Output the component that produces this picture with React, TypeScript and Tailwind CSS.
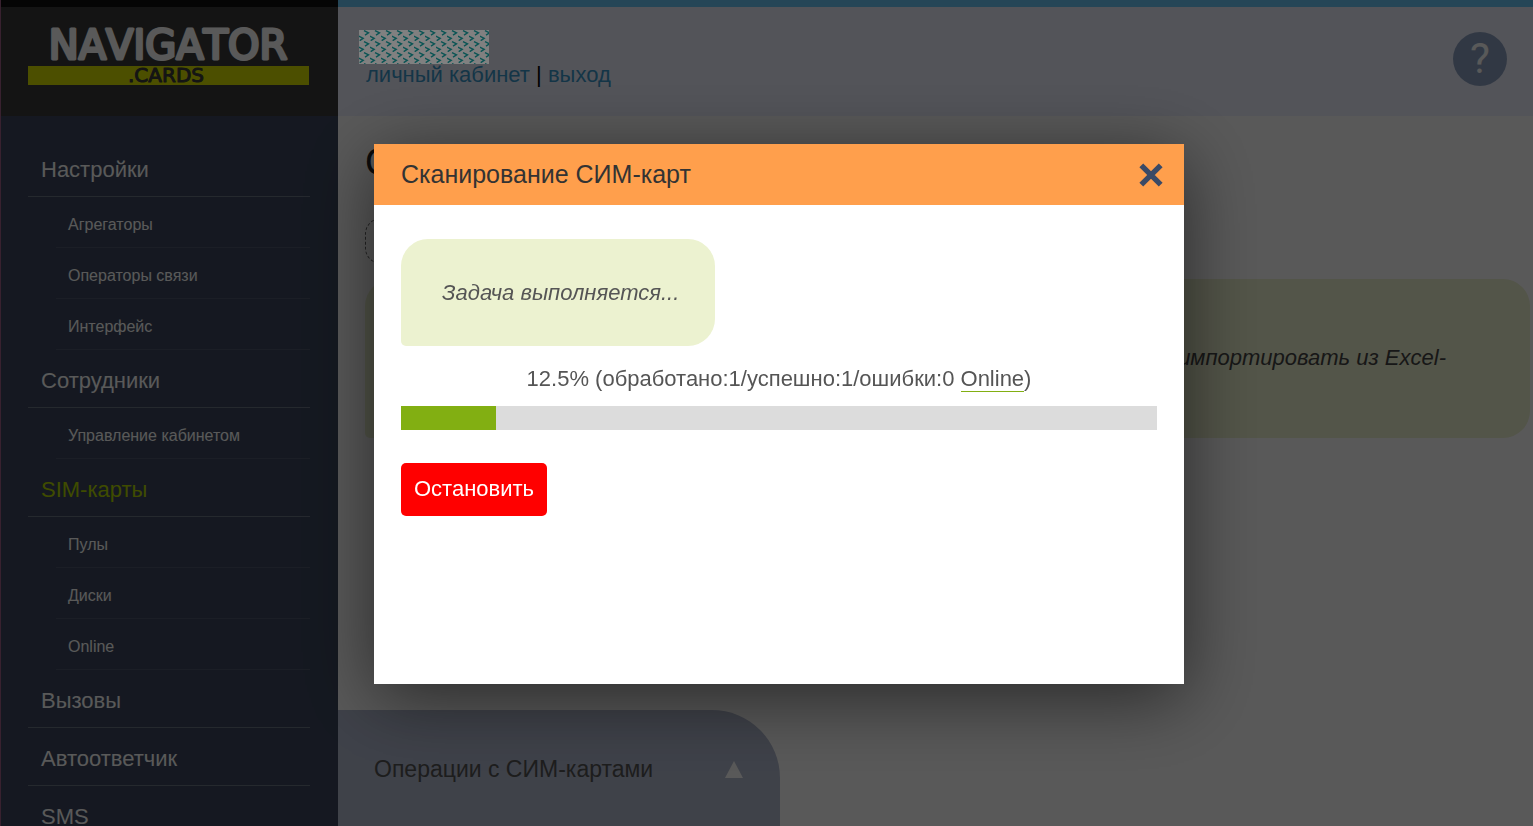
import React from "react";

type Section = { title: string; active?: boolean; items: string[] };

const sections: Section[] = [
  { title: "Настройки", items: ["Агрегаторы", "Операторы связи", "Интерфейс"] },
  { title: "Сотрудники", items: ["Управление кабинетом"] },
  { title: "SIM-карты", active: true, items: ["Пулы", "Диски", "Online"] },
  { title: "Вызовы", items: [] },
  { title: "Автоответчик", items: [] },
  { title: "SMS", items: [] },
];

function Logo() {
  return (
    <svg
      viewBox="0 0 281 60"
      className="block w-[281px] overflow-visible [font-kerning:none]"
      role="img"
      aria-label="Navigator.cards"
    >
      <rect y="41" width="281" height="19" fill="#d9e200" />
      <text
        x="140"
        y="34"
        textAnchor="middle"
        fontFamily="DejaVu Sans, sans-serif"
        fontSize="40"
        fill="#fff"
        stroke="#fff"
        strokeWidth="3"
        strokeLinejoin="round"
      >
        NAVIGATOR
      </text>
      <text
        x="138"
        y="57"
        textAnchor="middle"
        fontFamily="DejaVu Sans, sans-serif"
        fontSize="20"
        fill="#3a3a3a"
        stroke="#3a3a3a"
        strokeWidth="1"
        strokeLinejoin="round"
      >
        .CARDS
      </text>
    </svg>
  );
}

function Sidebar() {
  return (
    <aside className="flex w-[338px] shrink-0 flex-col border-l border-[#a06088] bg-[#3c475e]">
      <div className="h-[116px] shrink-0 border-t-[7px] border-[#101010] bg-[#3a3a3a] pt-[18px] pl-[27px]">
        <Logo />
      </div>
      <nav className="pt-[23px] pr-7 pl-[27px]">
        {sections.map((s) => (
          <div key={s.title}>
            <a
              href="#"
              className={
                "flex h-[58px] items-center border-b border-[#6c7585] pt-1 pl-[13px] text-[22px] " +
                (s.active ? "text-[#b4d800]" : "text-white")
              }
            >
              {s.title}
            </a>
            {s.items.map((item) => (
              <a
                key={item}
                href="#"
                className="ml-7 flex h-[51px] items-center border-b border-[#4e586d] pt-[6px] pl-3 text-base text-white"
              >
                {item}
              </a>
            ))}
          </div>
        ))}
      </nav>
    </aside>
  );
}

function HiddenName() {
  return (
    <svg className="relative z-20 -ml-[7px] block h-[34px] w-[130px]" aria-hidden="true">
      <defs>
        <pattern id="chevrons" width="11" height="11" patternUnits="userSpaceOnUse">
          <rect width="11" height="11" fill="#808080" />
          <path
            d="M5 .6 9.500 2.900 6 5.200M-.3 6.100 4.200 8.400 .7 10.700"
            fill="none"
            stroke="#0a5454"
            strokeWidth="1.4"
          />
        </pattern>
      </defs>
      <rect width="130" height="34" fill="url(#chevrons)" />
    </svg>
  );
}

function Page() {
  return (
    <div className="flex min-w-0 flex-1 flex-col bg-white">
      <header className="flex h-[116px] shrink-0 justify-between border-t-[7px] border-[#6cc8fa] bg-[#edf0ff] pr-[26px] pl-7">
        <div className="pt-[23px] text-[22px] leading-6">
          <HiddenName />
          <div className="-mt-px">
            <a href="#" className="text-[#3a98cc]">личный кабинет</a> |{" "}
            <a href="#" className="text-[#3a98cc]">выход</a>
          </div>
        </div>
        <button
          type="button"
          aria-label="Помощь"
          className="mt-[25px] flex size-[54px] items-center justify-center rounded-full bg-[#8ea2c2] font-[Roboto,sans-serif] text-[42px] leading-none text-white"
        >
          ?
        </button>
      </header>
      <main className="flex flex-1 flex-col pl-[27px]">
        <h1 className="mt-6 text-[38px] leading-[44px] text-[#222]">СИМ-карты</h1>
        <div className="mt-[34px] h-[46px] w-[300px] rounded-2xl border border-dashed border-[#666]" />
        <p className="mt-[15px] mr-[3px] flex h-[159px] items-center justify-end rounded-[27px] rounded-bl-[5px] bg-[#edf2d0] pr-[84px] pb-[2px] text-[22px] text-[#444] italic">
          импортировать из Excel-
        </p>
      </main>
      <button
        type="button"
        className="flex h-[116px] w-[442px] shrink-0 items-center justify-between rounded-tr-[68px] bg-[#b4bcd2] pt-[2px] pr-[37px] pl-9 text-left text-[23px] text-[#555]"
      >
        Операции с СИМ-картами
        <svg viewBox="0 0 18 17" className="h-[17px] w-[18px]" aria-hidden="true">
          <path d="M9 0 18 17H0Z" fill="#fff" />
        </svg>
      </button>
    </div>
  );
}

function ScanDialog() {
  const progress = 12.5;
  return (
    <div className="fixed inset-0 z-10 flex items-center justify-center bg-black/65 pt-[2px] pl-[25px]">
      <section
        role="dialog"
        aria-labelledby="scan-title"
        className="flex min-h-[540px] w-[810px] flex-col bg-white text-[#555] shadow-[0_14px_70px_rgba(0,0,0,0.55)]"
      >
        <header className="flex h-[61px] items-center justify-between bg-[#ff9f4c] pr-[21px] pl-[27px]">
          <h2 id="scan-title" className="text-[25px] text-[#333]">Сканирование СИМ-карт</h2>
          <button type="button" aria-label="Закрыть">
            <svg viewBox="0 0 24 24" className="block size-6" aria-hidden="true">
              <path
                d="M2.300 2.300 21.700 21.700M21.700 2.300 2.300 21.700"
                stroke="#3b4a66"
                strokeWidth="5.4"
              />
            </svg>
          </button>
        </header>
        <div className="flex flex-col items-start px-[27px] pt-[34px] text-[22px] leading-[26px]">
          <p className="rounded-[27px] rounded-bl-[5px] bg-[#ecf2d0] pt-[41px] pr-9 pb-10 pl-[41px] italic">
            Задача выполняется...
          </p>
          <div className="mt-5 self-center" id="scan-status">
            {progress}% (обработано:1/успешно:1/ошибки:0{" "}
            <a href="#" className="border-b border-[#82af12]">Online</a>)
          </div>
          <div
            role="progressbar"
            aria-labelledby="scan-status"
            aria-valuenow={progress}
            className="mt-[14px] h-6 w-full bg-[#dcdcdc]"
          >
            <div className="h-full bg-[#82af12]" style={{ width: `${progress}%` }} />
          </div>
          <button type="button" className="mt-[33px] h-[53px] rounded-[5px] bg-[#f00] px-[13px] pb-[2px] text-white">
            Остановить
          </button>
        </div>
      </section>
    </div>
  );
}

export default function App() {
  return (
    <div className="flex h-screen overflow-hidden font-['Liberation_Sans',Arial,sans-serif] text-black">
      <Sidebar />
      <Page />
      <ScanDialog />
    </div>
  );
}
